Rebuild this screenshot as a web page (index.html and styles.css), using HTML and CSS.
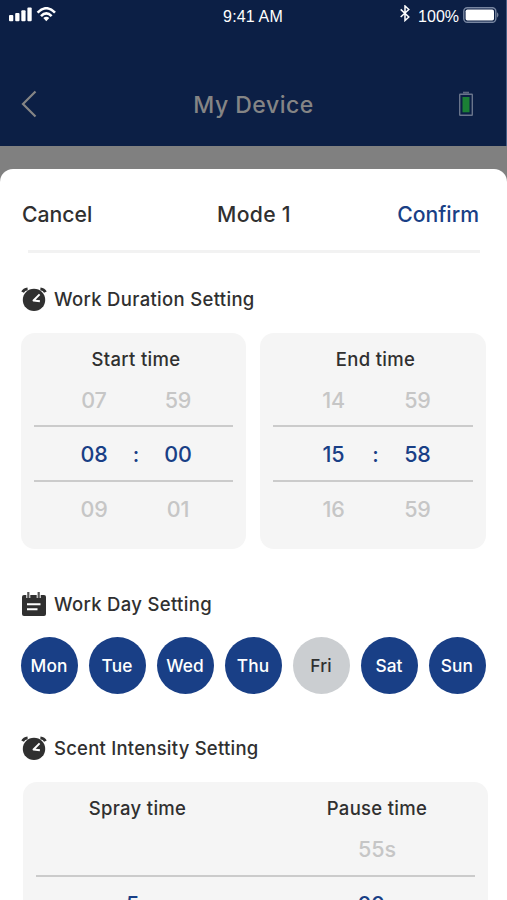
FILE: index.html
```html
<!DOCTYPE html>
<html lang="en">
<head>
<meta charset="utf-8">
<meta name="viewport" content="width=device-width, initial-scale=1">
<title>My Device</title>
<link rel="stylesheet" href="styles.css">
</head>
<body>
<svg width="0" height="0" class="defs" aria-hidden="true">
  <symbol id="alarm" viewBox="0 0 26 25">
    <path d="M1.600 5.200Q3 2.200 6.600 1.900M24.400 5.200Q23 2.200 19.400 1.900" fill="none" stroke="#303030" stroke-width="2.900"/>
    <circle cx="13" cy="12.900" r="11.200"/>
    <path d="M18.600 7.400 12.500 13.500 18.900 14.300" fill="none" stroke="#fff" stroke-width="1.900" stroke-linejoin="round"/>
  </symbol>
</svg>
<div class="screen">
  <header class="header">
    <div class="status">
      <div class="status-left">
        <svg width="48" height="16" viewBox="0 0 48 16" fill="#fff">
          <rect x="0" y="8" width="4.300" height="6.300" rx="1"/><rect x="6.200" y="6" width="4.300" height="8.300" rx="1"/><rect x="12.300" y="3.200" width="4.300" height="11.100" rx="1"/><rect x="18.400" y=".5" width="4.300" height="13.800" rx="1"/>
          <g fill="none" stroke="#fff" stroke-width="2.600"><path d="M28.600 5.600Q37.300-3.200 46 5.600"/><path d="M32 9.100Q37.300 3.700 42.600 9.100"/></g>
          <path d="M34.300 11.100Q37.300 8.600 40.300 11.100L37.300 14.300Z"/>
        </svg>
      </div>
      <div class="status-time">9:41 AM</div>
      <div class="status-right">
        <svg width="10" height="17" viewBox="0 0 10 17" fill="none" stroke="#fff" stroke-width="1.500"><path d="M.7 4.400 8.800 12 5 15.500V1L8.800 4.500.7 12"/></svg>
        <span class="percent">100%</span>
        <svg width="37" height="17" viewBox="0 0 37 17"><rect x=".8" y=".8" width="32" height="14.400" rx="3.500" fill="none" stroke="#7886a1" stroke-width="1.400"/><rect x="2.600" y="2.400" width="28.400" height="11.200" rx="1.800" fill="#fff"/><path d="M34.200 5.300Q36.600 8 34.200 10.700Z" fill="#8a96ad"/></svg>
      </div>
    </div>
    <nav class="nav">
      <svg width="16" height="28" viewBox="0 0 16 28" fill="none" stroke="#858585" stroke-width="2.200"><path d="M14.500 1.500 2 14 14.500 26.500"/></svg>
      <h1>My Device</h1>
      <svg width="16" height="26" viewBox="0 0 16 26"><path d="M5 .7H11V2.500H5Z" fill="#5d6880"/><rect x="1.700" y="3.200" width="12.600" height="21" rx=".5" fill="none" stroke="#69748b" stroke-width="1.400"/><rect x="4.500" y="6" width="7" height="15.300" fill="#1b8035"/></svg>
    </nav>
  </header>
  <main class="sheet">
    <div class="toolbar"><span class="cancel">Cancel</span><span class="mode">Mode 1</span><span class="confirm">Confirm</span></div>
    <hr class="rule">
    <section>
      <h2><svg class="icon" fill="#303030"><use href="#alarm"/></svg><span>Work Duration Setting</span></h2>
      <div class="cards">
        <div class="card">
          <h3>Start time</h3>
          <div class="row"><span>07</span><i></i><span>59</span></div>
          <div class="row selected"><span>08</span><i>:</i><span>00</span></div>
          <div class="row"><span>09</span><i></i><span>01</span></div>
        </div>
        <div class="card">
          <h3>End time</h3>
          <div class="row"><span>14</span><i></i><span>59</span></div>
          <div class="row selected"><span>15</span><i>:</i><span>58</span></div>
          <div class="row"><span>16</span><i></i><span>59</span></div>
        </div>
      </div>
    </section>
    <section class="day-section">
      <h2><svg class="icon" viewBox="0 0 26 25"><rect x="1" y="3" width="24" height="21" rx="2" fill="#303030"/><g stroke="#fff" stroke-width="4"><path d="M7.300 1V6M17.700 1V6"/></g><g stroke="#555" stroke-width="2.200"><path d="M7.300 0V6M17.700 0V6"/></g><path d="M6 12.200H19.500M6 17.300H16.500" stroke="#fff" stroke-width="2"/></svg><span>Work Day Setting</span></h2>
      <div class="days"><span>Mon</span><span>Tue</span><span>Wed</span><span>Thu</span><span class="off">Fri</span><span>Sat</span><span>Sun</span></div>
    </section>
    <section class="scent-section">
      <h2><svg class="icon" fill="#303030"><use href="#alarm"/></svg><span>Scent Intensity Setting</span></h2>
      <div class="card wide">
        <div class="pair"><h3>Spray time</h3><h3>Pause time</h3></div>
        <div class="pair values"><span></span><span>55s</span></div>
        <div class="pair selected"><span>5</span><span>00</span></div>
      </div>
    </section>
  </main>
</div>
</body>
</html>
```
FILE: styles.css
```css
* { box-sizing: border-box; }
body { margin: 0; overflow: hidden; font-family: Inter, "Liberation Sans", sans-serif; font-weight: 500; color: #303030; }
svg { display: block; flex: none; }
.defs { position: absolute; }
h1, h2, h3 { margin: 0; font-weight: 500; }
.screen { height: 900px; overflow: hidden; background: #808080; }
.header { height: 146px; background: #0c1f45; border-right: 1px solid #475e84; }
.status { height: 30px; display: grid; grid-template-columns: 1fr 80px 1fr; color: #fff; font: 16px/33px "Liberation Sans", sans-serif; }
.status-left { padding: 7px 0 0 9px; }
.status-time { text-align: center; white-space: nowrap; letter-spacing: .15px; }
.status-right { display: flex; justify-content: flex-end; padding-right: 6px; }
.status-right svg:first-child { margin: 5px 8px 0 0; }
.status-right svg:last-child { margin: 7px 0 0 4px; }
.nav { height: 116px; padding: 60px 32px 0 21px; display: grid; grid-template-columns: 24px 1fr 16px; align-items: start; }
.nav > svg:last-child { margin-top: 1px; }
.nav h1 { color: #858585; font-size: 23px; line-height: 30px; letter-spacing: .5px; text-align: center; padding-left: 4px; }
.sheet { margin-top: 23px; height: 731px; background: #fff; border-radius: 13px 13px 0 0; }
.toolbar { height: 81px; padding: 30px 28px 0 22px; display: grid; grid-template-columns: 1fr 74px 1fr; font-size: 21.2px; line-height: 30px; white-space: nowrap; }
.mode { position: relative; left: 3.5px; letter-spacing: .3px; }
.confirm { color: #193f86; text-align: right; }
.rule { margin: 0 27px 0 28px; border: 0; height: 3px; background: #f2f2f2; }
h2 { display: flex; align-items: center; gap: 7px; margin: 34px 0 0 21px; height: 24px; font-size: 18.5px; line-height: 24px; letter-spacing: .32px; white-space: nowrap; }
.icon { width: 26px; height: 25px; }
.cards { display: grid; grid-template-columns: 225px 226px; gap: 14px; padding: 22px 0 0 21px; }
.card { height: 216px; background: #f5f5f5; border-radius: 14px; padding: 14px 13px 0; }
h3 { font-size: 18.5px; line-height: 24px; letter-spacing: .3px; text-align: center; padding-left: 5px; }
.row { height: 54px; display: grid; grid-template-columns: 42px 42px 42px; justify-content: center; text-align: center; font-size: 21.5px; line-height: 54px; color: #c6c6c6; padding-left: 5px; letter-spacing: -.2px; }
h3 + .row { line-height: 58px; }
.row i { font-style: normal; }
.row.selected { height: 57px; color: #193f86; border-top: 2px solid #cbcbcb; border-bottom: 2px solid #cbcbcb; }
.day-section h2 { margin-top: 43px; }
.days { display: flex; gap: 11px; padding: 21px 0 0 20.5px; }
.days span { width: 57px; height: 57px; border-radius: 50%; background: #193f86; color: #fff; text-align: center; font-size: 17.3px; line-height: 57px; letter-spacing: .1px; }
.days .off { background: #cbced1; color: #303030; }
.scent-section h2 { margin-top: 42px; letter-spacing: .23px; }
.wide { width: 465px; margin: 22px 0 0 23px; }
.pair { display: grid; grid-template-columns: 203px 276px; text-align: center; }
.wide h3 { padding: 0; }
.pair.values { color: #c6c6c6; font-size: 21.5px; height: 55px; line-height: 58px; }
.pair.selected { color: #193f86; font-size: 21.5px; line-height: 55px; letter-spacing: -.3px; border-top: 2px solid #cbcbcb; grid-template-columns: 193px 284px; }
```
